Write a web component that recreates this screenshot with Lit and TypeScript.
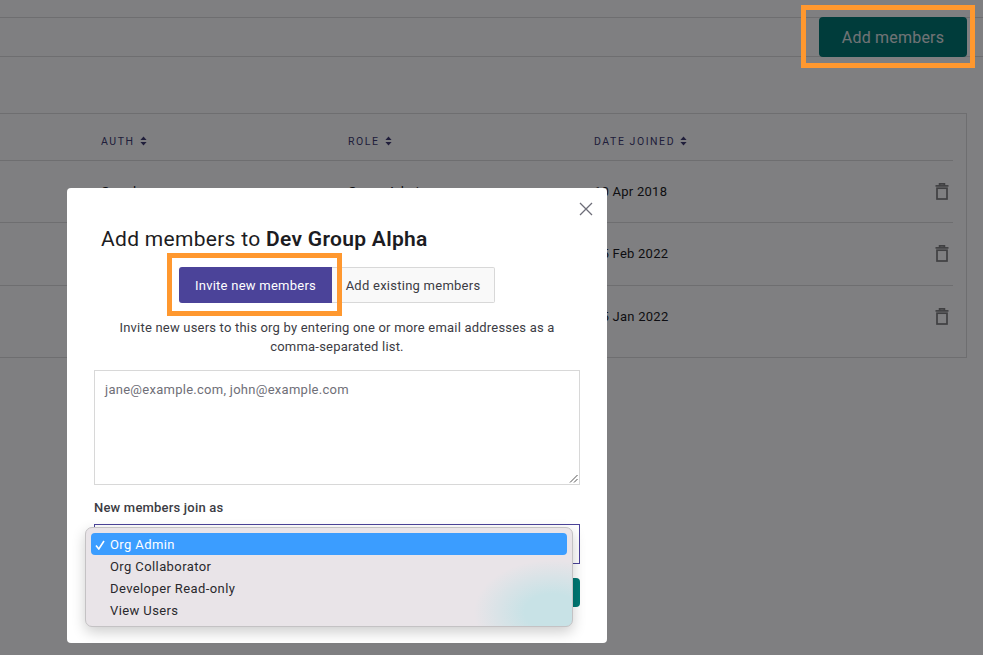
import { LitElement, html, css } from "lit";
import { customElement } from "lit/decorators.js";

const sortIcon = html`<svg class="sort" width="7" height="10" viewBox="0 0 7 10"><path d="M3.5 0.5 L6.6 4 H0.4 Z M3.5 9.5 L0.4 6 H6.6 Z" fill="currentColor"/></svg>`;
const trash = html`<svg class="trash" width="14" height="17" viewBox="0 0 14 17" fill="none" stroke="#808080" stroke-width="1.7"><path d="M0.5 2.9 H13.5"/><path d="M4.6 2.6 V0.8 H9.4 V2.6"/><rect x="2" y="5.2" width="10" height="10.8"/></svg>`;

const rows = [
  { auth: "Google", role: "Group Admin", date: "10 Apr 2018" },
  { auth: "Google", role: "Group Admin", date: "15 Feb 2022" },
  { auth: "Google", role: "Group Admin", date: "15 Jan 2022" },
];

@customElement("app-root")
export class AppRoot extends LitElement {
  static styles = css`
    :host {
      display: block;
      position: relative;
      width: 983px;
      height: 655px;
      overflow: hidden;
      background: #fff;
      font-family: Roboto, "Liberation Sans", sans-serif;
      color: #1c1c22;
    }
    .bar {
      margin-top: 17px;
      height: 40px;
      box-sizing: border-box;
      border-top: 1px solid #ddd;
      border-bottom: 1px solid #ddd;
      display: flex;
      justify-content: flex-end;
      padding-right: 16px;
    }
    .add {
      margin-top: -1px;
      width: 148px;
      height: 40px;
      border-radius: 4px;
      background: #007873;
      color: #e0e6e6;
      display: flex;
      align-items: center;
      justify-content: center;
      font-size: 16px;
      letter-spacing: 0.2px;
    }
    .table {
      margin-top: 56px;
      width: 967px;
      height: 245px;
      box-sizing: border-box;
      border: 1px solid #ddd;
      border-left: 0;
      padding-right: 13px;
    }
    .row {
      display: grid;
      grid-template-columns: 247px 246px 1fr 18px;
      padding-left: 101px;
      align-items: center;
      border-bottom: 1px solid #ddd;
      height: 62.3px;
      box-sizing: border-box;
      font-size: 13px;
      letter-spacing: 0.25px;
    }
    .row:last-child { border-bottom: 0; }
    .head {
      height: 47px;
      padding-top: 8px;
      font-size: 10.5px;
      letter-spacing: 1.55px;
      color: #413d72;
    }
    .head span { display: flex; align-items: center; gap: 5px; }
    .sort { flex: none; }
    .trash { display: block; }
    .shade {
      position: absolute;
      inset: 0;
      background: rgba(0, 0, 3, 0.5);
    }
    .modal {
      position: absolute;
      left: 67px;
      top: 188px;
      width: 540px;
      height: 455px;
      box-sizing: border-box;
      background: #fff;
      border-radius: 4px;
      padding: 0 27px;
      display: flex;
      flex-direction: column;
    }
    .close {
      position: absolute;
      right: 14px;
      top: 14px;
      display: block;
    }
    h2 {
      margin: 38px 0 0 7px;
      font-size: 21px;
      line-height: 26px;
      font-weight: 400;
      color: #1c1c22;
      letter-spacing: 0.3px;
    }
    h2 b { font-weight: 600; }
    .tabs {
      display: flex;
      justify-content: center;
      margin-top: 15px;
    }
    .tab {
      height: 36px;
      box-sizing: border-box;
      display: flex;
      align-items: center;
      justify-content: center;
      font-size: 13px;
      letter-spacing: 0.25px;
    }
    .tab.on {
      width: 153px;
      background: #4b4399;
      color: #fff;
      border-radius: 3px 0 0 3px;
    }
    .tab.off {
      width: 163px;
      background: #f9f9f9;
      border: 1px solid #d8d8d8;
      border-left: 0;
      border-radius: 0 2px 2px 0;
      color: #3c3c44;
    }
    .desc {
      margin: 15px 0 0;
      text-align: center;
      font-size: 13px;
      line-height: 19px;
      color: #3c3c44;
      letter-spacing: 0.2px;
      padding: 0 20px;
    }
    .area {
      margin-top: 14px;
      height: 115px;
      box-sizing: border-box;
      border: 1px solid #d8d8d8;
      padding: 11px 10px;
      font-size: 13px;
      line-height: 16px;
      letter-spacing: 0.27px;
      color: #6f6f78;
      position: relative;
    }
    .grip { position: absolute; right: 1px; bottom: 1px; display: block; }
    label {
      display: block;
      margin-top: 14px;
      font-size: 13px;
      line-height: 17px;
      font-weight: 500;
      color: #3c3c44;
      letter-spacing: 0.2px;
    }
    .select {
      margin-top: 8px;
      height: 40px;
      box-sizing: border-box;
      border: 1px solid #4b4399;
    }
    .submit {
      margin-top: 14px;
      align-self: flex-end;
      width: 120px;
      height: 29px;
      background: #007873;
      border-radius: 4px;
    }
    .menu {
      position: absolute;
      left: 18px;
      top: 339px;
      width: 487.5px;
      height: 100px;
      box-sizing: border-box;
      padding: 5px;
      border-radius: 7px;
      border: 1px solid #c4c2c4;
      background:
        radial-gradient(ellipse 78px 52px at 466px 84px, #c8e2e6 35%, rgba(200, 226, 230, 0) 100%),
        #e9e4e8;
      box-shadow: 0 5px 14px rgba(0, 0, 0, 0.2);
      font-size: 13px;
      letter-spacing: 0.4px;
      color: #29292d;
    }
    .opt {
      height: 22px;
      line-height: 23px;
      padding-left: 19px;
      position: relative;
    }
    .opt.sel {
      background: #3b9dff;
      color: #fff;
      border-radius: 4px;
    }
    .tick { position: absolute; left: 4px; top: 7px; display: block; }
    .mark {
      position: absolute;
      box-sizing: border-box;
      border: 5px solid #ff982f;
    }
    .mark.a { left: 801px; top: 5px; width: 174px; height: 63px; }
    .mark.b { left: 167px; top: 253px; width: 175px; height: 63px; }
  `;

  render() {
    return html`
      <div class="bar"><div class="add">Add members</div></div>
      <div class="table">
        <div class="row head">
          <span>AUTH ${sortIcon}</span>
          <span>ROLE ${sortIcon}</span>
          <span>DATE JOINED ${sortIcon}</span>
        </div>
        ${rows.map(
          (r) => html`<div class="row">
            <span>${r.auth}</span><span>${r.role}</span><span>${r.date}</span>${trash}
          </div>`
        )}
      </div>
      <div class="shade"></div>
      <div class="modal">
        <svg class="close" width="14" height="14" viewBox="0 0 14 14" stroke="#6d6d78" stroke-width="1.3"><path d="M1 1 L13 13 M13 1 L1 13"/></svg>
        <h2>Add members to <b>Dev Group Alpha</b></h2>
        <div class="tabs">
          <div class="tab on">Invite new members</div>
          <div class="tab off">Add existing members</div>
        </div>
        <p class="desc">Invite new users to this org by entering one or more email addresses as a comma-separated list.</p>
        <div class="area">
          jane@example.com, john@example.com
          <svg class="grip" width="9" height="9" viewBox="0 0 9 9" stroke="#555" stroke-width="1"><path d="M1 8.5 L8.5 1 M5 8.5 L8.5 5"/></svg>
        </div>
        <label>New members join as</label>
        <div class="select"></div>
        <div class="submit"></div>
        <div class="menu">
          <div class="opt sel">
            <svg class="tick" width="10" height="10" viewBox="0 0 10 10" fill="none" stroke="#fff" stroke-width="1.6"><path d="M1 5.5 L3.8 9 L9 1"/></svg>
            Org Admin
          </div>
          <div class="opt">Org Collaborator</div>
          <div class="opt">Developer Read-only</div>
          <div class="opt">View Users</div>
        </div>
      </div>
      <div class="mark a"></div>
      <div class="mark b"></div>
    `;
  }
}
